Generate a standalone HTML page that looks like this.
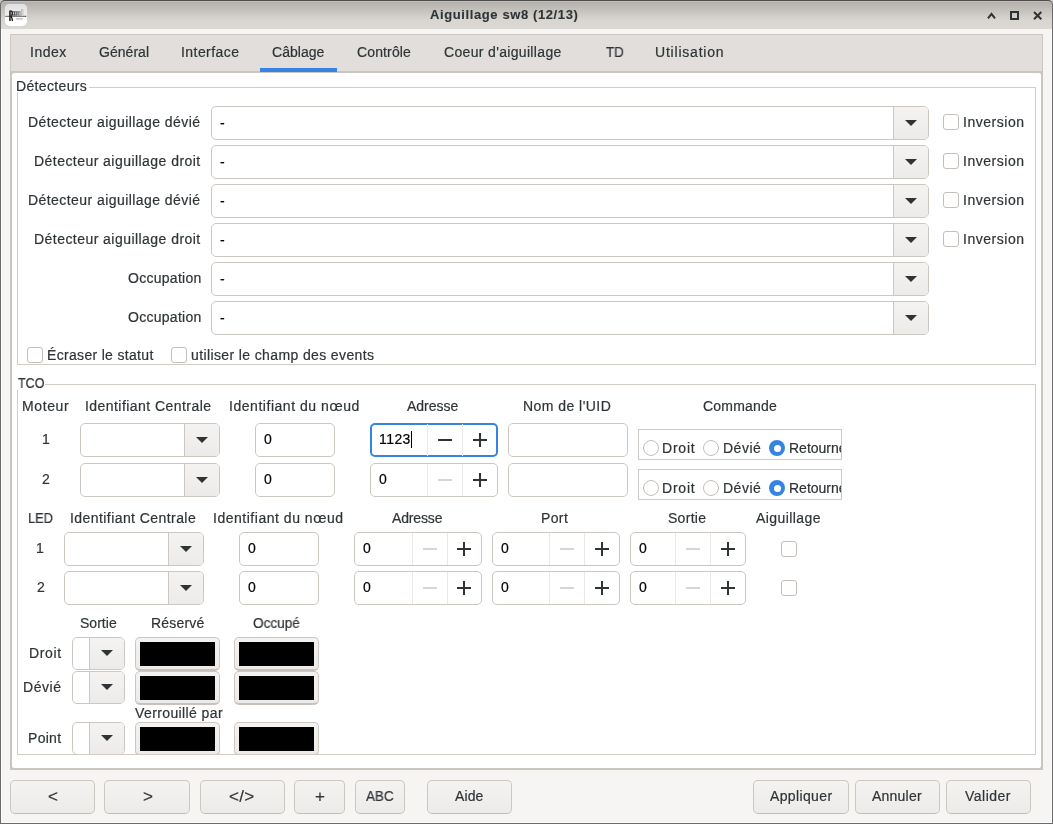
<!DOCTYPE html>
<html><head><meta charset="utf-8"><style>
html,body{margin:0;padding:0;width:1053px;height:824px;overflow:hidden;background:#c8c8c8}
body{position:relative;font-family:"Liberation Sans",sans-serif}
div,span,svg{position:absolute}
span{white-space:pre;will-change:transform;-webkit-text-stroke:0.2px currentColor}
</style></head><body>
<div style="left:0px;top:0px;width:1053px;height:824px;background:#f6f5f4"></div>
<div style="left:0px;top:0px;width:1053px;height:29px;background:linear-gradient(#c2c0bd 0,#c2c0bd 1.5px,#b4b1ad 2px,#d9d5d1 20px,#dcd8d4 29px)"></div>
<span style="left:430.00px;top:7.20px;font-size:13px;line-height:16px;font-weight:bold;color:#2e3436;letter-spacing:0.606px;-webkit-text-stroke:0.1px currentColor;">Aiguillage sw8 (12/13)</span>
<svg style="left:980px;top:6px" width="70" height="20"><g stroke="#2e3436" stroke-width="2" fill="none"><path d="M8 12.3L11.5 7.8L15 12.3"/><rect x="31" y="6" width="7" height="7"/><path d="M54 6L61.3 13.3M61.3 6L54 13.3"/></g></svg>
<div style="left:5px;top:4px;width:22px;height:22px;border-radius:5px;background:#fff"></div>
<svg style="left:5px;top:4px" width="22" height="22"><defs><linearGradient id="ig" x1="0" y1="0" x2="0" y2="1"><stop offset="0" stop-color="#e0e0e0"/><stop offset="1" stop-color="#f0f0f0"/></linearGradient><linearGradient id="lg" x1="0" y1="0" x2="1" y2="0"><stop offset="0" stop-color="#3a3a3a"/><stop offset="1" stop-color="#8a8a8a"/></linearGradient><linearGradient id="lg2" x1="0" y1="0" x2="1" y2="0"><stop offset="0" stop-color="#b0b0b0"/><stop offset="1" stop-color="#d8d8d8"/></linearGradient></defs><path d="M0 5Q0 0 5 0H17Q22 0 22 5V12.4H0Z" fill="url(#ig)"/><path d="M7.2 7.3H15.6V11.6H7.2Z" fill="url(#lg)"/><path d="M8 8.3H9V10.6H8ZM10.2 8.3H11.2V10.6H10.2ZM12.6 8.3H13.2V11.6H12.6ZM14.2 8.6H15V10.4H14.2Z" fill="#f2f2f2" opacity="0.9"/><path d="M16 5.1H18.8V11.6H16Z" fill="url(#lg2)"/><path d="M16.9 6.4H17.5V11.6H16.9Z" fill="#f4f4f4" opacity="0.7"/><path d="M0.2 12.35H20.6" stroke="#555" stroke-width="0.9"/><path d="M20 11.4L21.6 12.35L20 13.3Z" fill="#444"/><rect x="4.2" y="6.5" width="1.5" height="10.5" fill="#1c1c1c"/><path d="M5.2 7.2H6.3Q7.2 7.2 7.2 8.6V9.9Q7.2 11.2 6.1 11.2H5.4" stroke="#1c1c1c" stroke-width="1.3" fill="none"/><path d="M6.1 11.6L7.6 17" stroke="#1c1c1c" stroke-width="1.3"/><rect x="10.9" y="14.1" width="7" height="1.5" fill="#c2c2c2"/></svg>
<div style="left:10px;top:34px;width:1033px;height:39px;box-sizing:border-box;border:1px solid #cdc7c2;border-bottom:none;background:#e1dedb"></div>
<div style="left:10px;top:71px;width:1033px;height:699px;background:#cbc5c0"></div>
<div style="left:12px;top:73px;width:1029px;height:695px;background:#fff;border-radius:2px"></div>
<div style="left:260px;top:68px;width:77px;height:4px;background:#3584e4"></div>
<span style="left:30.00px;top:44.15px;font-size:14px;line-height:16px;font-weight:normal;color:#2e3436;letter-spacing:0.488px;">Index</span>
<span style="left:99.30px;top:44.15px;font-size:14px;line-height:16px;font-weight:normal;color:#2e3436;letter-spacing:0.034px;">Général</span>
<span style="left:181.20px;top:44.15px;font-size:14px;line-height:16px;font-weight:normal;color:#2e3436;letter-spacing:0.439px;">Interface</span>
<span style="left:272.20px;top:44.15px;font-size:14px;line-height:16px;font-weight:normal;color:#2e3436;letter-spacing:0.022px;">Câblage</span>
<span style="left:357.40px;top:44.15px;font-size:14px;line-height:16px;font-weight:normal;color:#2e3436;letter-spacing:0.138px;">Contrôle</span>
<span style="left:444.10px;top:44.15px;font-size:14px;line-height:16px;font-weight:normal;color:#2e3436;letter-spacing:0.332px;">Coeur d'aiguillage</span>
<span style="left:606.00px;top:44.15px;font-size:14px;line-height:16px;font-weight:normal;color:#2e3436;letter-spacing:0.000px;transform:scaleX(0.9541);transform-origin:0.00px 0;">TD</span>
<span style="left:655.10px;top:44.15px;font-size:14px;line-height:16px;font-weight:normal;color:#2e3436;letter-spacing:0.790px;">Utilisation</span>
<div style="left:17px;top:87px;width:1019px;height:278px;box-sizing:border-box;border:1px solid #d2ccc7"></div>
<div style="left:16px;top:78px;width:73px;height:14px;background:#fff"></div>
<span style="left:16.40px;top:77.95px;font-size:14px;line-height:16px;font-weight:normal;color:#2e3436;letter-spacing:0.345px;">Détecteurs</span>
<span style="left:27.70px;top:114.15px;font-size:14px;line-height:16px;font-weight:normal;color:#2e3436;letter-spacing:0.439px;">Détecteur aiguillage dévié</span>
<div style="left:211px;top:106px;width:718px;height:34px;overflow:hidden"><div style="left:0;top:0;width:718px;height:34px;box-sizing:border-box;border:1px solid #cdc7c2;border-radius:5px;background:#fff;overflow:hidden"><div style="left:681px;top:0;right:0;bottom:0;border-left:1px solid #cdc7c2;background:linear-gradient(#f4f3f2,#edebe9)"></div><svg style="position:absolute;left:693px;top:13px" width="12" height="6"><path d="M0 0H12L6 6Z" fill="#2e3436"/></svg></div></div>
<span style="left:220.00px;top:115.15px;font-size:14px;line-height:16px;font-weight:normal;color:#000;letter-spacing:0.000px;">-</span>
<div style="left:943px;top:114px;width:16px;height:16px;box-sizing:border-box;border:1px solid #c6bfb9;border-radius:3px;background:#fff"></div>
<span style="left:962.60px;top:114.15px;font-size:14px;line-height:16px;font-weight:normal;color:#2e3436;letter-spacing:0.522px;">Inversion</span>
<span style="left:33.70px;top:153.15px;font-size:14px;line-height:16px;font-weight:normal;color:#2e3436;letter-spacing:0.453px;">Détecteur aiguillage droit</span>
<div style="left:211px;top:145px;width:718px;height:34px;overflow:hidden"><div style="left:0;top:0;width:718px;height:34px;box-sizing:border-box;border:1px solid #cdc7c2;border-radius:5px;background:#fff;overflow:hidden"><div style="left:681px;top:0;right:0;bottom:0;border-left:1px solid #cdc7c2;background:linear-gradient(#f4f3f2,#edebe9)"></div><svg style="position:absolute;left:693px;top:13px" width="12" height="6"><path d="M0 0H12L6 6Z" fill="#2e3436"/></svg></div></div>
<span style="left:220.00px;top:154.15px;font-size:14px;line-height:16px;font-weight:normal;color:#000;letter-spacing:0.000px;">-</span>
<div style="left:943px;top:153px;width:16px;height:16px;box-sizing:border-box;border:1px solid #c6bfb9;border-radius:3px;background:#fff"></div>
<span style="left:962.60px;top:153.15px;font-size:14px;line-height:16px;font-weight:normal;color:#2e3436;letter-spacing:0.522px;">Inversion</span>
<span style="left:27.70px;top:192.15px;font-size:14px;line-height:16px;font-weight:normal;color:#2e3436;letter-spacing:0.439px;">Détecteur aiguillage dévié</span>
<div style="left:211px;top:184px;width:718px;height:34px;overflow:hidden"><div style="left:0;top:0;width:718px;height:34px;box-sizing:border-box;border:1px solid #cdc7c2;border-radius:5px;background:#fff;overflow:hidden"><div style="left:681px;top:0;right:0;bottom:0;border-left:1px solid #cdc7c2;background:linear-gradient(#f4f3f2,#edebe9)"></div><svg style="position:absolute;left:693px;top:13px" width="12" height="6"><path d="M0 0H12L6 6Z" fill="#2e3436"/></svg></div></div>
<span style="left:220.00px;top:193.15px;font-size:14px;line-height:16px;font-weight:normal;color:#000;letter-spacing:0.000px;">-</span>
<div style="left:943px;top:192px;width:16px;height:16px;box-sizing:border-box;border:1px solid #c6bfb9;border-radius:3px;background:#fff"></div>
<span style="left:962.60px;top:192.15px;font-size:14px;line-height:16px;font-weight:normal;color:#2e3436;letter-spacing:0.522px;">Inversion</span>
<span style="left:33.70px;top:231.15px;font-size:14px;line-height:16px;font-weight:normal;color:#2e3436;letter-spacing:0.453px;">Détecteur aiguillage droit</span>
<div style="left:211px;top:223px;width:718px;height:34px;overflow:hidden"><div style="left:0;top:0;width:718px;height:34px;box-sizing:border-box;border:1px solid #cdc7c2;border-radius:5px;background:#fff;overflow:hidden"><div style="left:681px;top:0;right:0;bottom:0;border-left:1px solid #cdc7c2;background:linear-gradient(#f4f3f2,#edebe9)"></div><svg style="position:absolute;left:693px;top:13px" width="12" height="6"><path d="M0 0H12L6 6Z" fill="#2e3436"/></svg></div></div>
<span style="left:220.00px;top:232.15px;font-size:14px;line-height:16px;font-weight:normal;color:#000;letter-spacing:0.000px;">-</span>
<div style="left:943px;top:231px;width:16px;height:16px;box-sizing:border-box;border:1px solid #c6bfb9;border-radius:3px;background:#fff"></div>
<span style="left:962.60px;top:231.15px;font-size:14px;line-height:16px;font-weight:normal;color:#2e3436;letter-spacing:0.522px;">Inversion</span>
<span style="left:127.50px;top:270.15px;font-size:14px;line-height:16px;font-weight:normal;color:#2e3436;letter-spacing:0.274px;">Occupation</span>
<div style="left:211px;top:262px;width:718px;height:34px;overflow:hidden"><div style="left:0;top:0;width:718px;height:34px;box-sizing:border-box;border:1px solid #cdc7c2;border-radius:5px;background:#fff;overflow:hidden"><div style="left:681px;top:0;right:0;bottom:0;border-left:1px solid #cdc7c2;background:linear-gradient(#f4f3f2,#edebe9)"></div><svg style="position:absolute;left:693px;top:13px" width="12" height="6"><path d="M0 0H12L6 6Z" fill="#2e3436"/></svg></div></div>
<span style="left:220.00px;top:271.15px;font-size:14px;line-height:16px;font-weight:normal;color:#000;letter-spacing:0.000px;">-</span>
<span style="left:127.50px;top:309.15px;font-size:14px;line-height:16px;font-weight:normal;color:#2e3436;letter-spacing:0.274px;">Occupation</span>
<div style="left:211px;top:301px;width:718px;height:34px;overflow:hidden"><div style="left:0;top:0;width:718px;height:34px;box-sizing:border-box;border:1px solid #cdc7c2;border-radius:5px;background:#fff;overflow:hidden"><div style="left:681px;top:0;right:0;bottom:0;border-left:1px solid #cdc7c2;background:linear-gradient(#f4f3f2,#edebe9)"></div><svg style="position:absolute;left:693px;top:13px" width="12" height="6"><path d="M0 0H12L6 6Z" fill="#2e3436"/></svg></div></div>
<span style="left:220.00px;top:310.15px;font-size:14px;line-height:16px;font-weight:normal;color:#000;letter-spacing:0.000px;">-</span>
<div style="left:27px;top:347px;width:16px;height:16px;box-sizing:border-box;border:1px solid #c6bfb9;border-radius:3px;background:#fff"></div>
<span style="left:46.50px;top:346.95px;font-size:14px;line-height:16px;font-weight:normal;color:#2e3436;letter-spacing:0.321px;">Écraser le statut</span>
<div style="left:171px;top:347px;width:16px;height:16px;box-sizing:border-box;border:1px solid #c6bfb9;border-radius:3px;background:#fff"></div>
<span style="left:191.20px;top:346.95px;font-size:14px;line-height:16px;font-weight:normal;color:#2e3436;letter-spacing:0.380px;">utiliser le champ des events</span>
<div style="left:17px;top:384px;width:1019px;height:371px;box-sizing:border-box;border:1px solid #d2ccc7"></div>
<div style="left:16px;top:376px;width:29px;height:14px;background:#fff"></div>
<span style="left:17.50px;top:374.65px;font-size:14px;line-height:16px;font-weight:normal;color:#2e3436;letter-spacing:0.000px;transform:scaleX(0.8934);transform-origin:0.00px 0;">TCO</span>
<span style="left:22.40px;top:398.15px;font-size:14px;line-height:16px;font-weight:normal;color:#2e3436;letter-spacing:0.598px;">Moteur</span>
<span style="left:85.30px;top:398.15px;font-size:14px;line-height:16px;font-weight:normal;color:#2e3436;letter-spacing:0.446px;">Identifiant Centrale</span>
<span style="left:229.00px;top:398.15px;font-size:14px;line-height:16px;font-weight:normal;color:#2e3436;letter-spacing:0.536px;">Identifiant du nœud</span>
<span style="left:407.00px;top:398.15px;font-size:14px;line-height:16px;font-weight:normal;color:#2e3436;letter-spacing:-0.012px;">Adresse</span>
<span style="left:523.30px;top:398.15px;font-size:14px;line-height:16px;font-weight:normal;color:#2e3436;letter-spacing:0.455px;">Nom de l'UID</span>
<span style="left:702.60px;top:398.15px;font-size:14px;line-height:16px;font-weight:normal;color:#2e3436;letter-spacing:0.203px;">Commande</span>
<span style="left:41.70px;top:431.15px;font-size:14px;line-height:16px;font-weight:normal;color:#2e3436;letter-spacing:0.000px;">1</span>
<div style="left:80px;top:423px;width:140px;height:34px;overflow:hidden"><div style="left:0;top:0;width:140px;height:34px;box-sizing:border-box;border:1px solid #cdc7c2;border-radius:5px;background:#fff;overflow:hidden"><div style="left:103px;top:0;right:0;bottom:0;border-left:1px solid #cdc7c2;background:linear-gradient(#f4f3f2,#edebe9)"></div><svg style="position:absolute;left:115px;top:13px" width="12" height="6"><path d="M0 0H12L6 6Z" fill="#2e3436"/></svg></div></div>
<div style="left:255px;top:423px;width:80px;height:34px;box-sizing:border-box;border:1px solid #cdc7c2;border-radius:5px;background:#fff"></div>
<span style="left:264.10px;top:431.15px;font-size:14px;line-height:16px;font-weight:normal;color:#000;letter-spacing:0.000px;">0</span>
<div style="left:370px;top:423px;width:128px;height:34px;box-sizing:border-box;border:2px solid #3584e4;border-radius:5px;background:#fff"></div>
<div style="left:427px;top:424px;width:1px;height:32px;background:#ebe9e6"></div>
<div style="left:462px;top:424px;width:1px;height:32px;background:#ebe9e6"></div>
<svg style="left:437.5px;top:433.0px" width="14" height="14"><path d="M0 7H14" stroke="#2e3436" stroke-width="2"/></svg>
<svg style="left:472.5px;top:433.0px" width="14" height="14"><path d="M0 7H14M7 0V14" stroke="#2e3436" stroke-width="2"/></svg>
<span style="left:378.80px;top:431.15px;font-size:14px;line-height:16px;font-weight:normal;color:#000;letter-spacing:0.427px;">1123</span>
<div style="left:508px;top:423px;width:120px;height:34px;box-sizing:border-box;border:1px solid #cdc7c2;border-radius:5px;background:#fff"></div>
<div style="left:638px;top:429px;width:204px;height:31px;box-sizing:border-box;border:1px solid #cfcac5;overflow:hidden"></div>
<div style="left:643px;top:440px;width:16px;height:16px;box-sizing:border-box;border:1px solid #c6bfb9;border-radius:50%;background:#fff"></div>
<span style="left:662.00px;top:439.95px;font-size:14px;line-height:16px;font-weight:normal;color:#2e3436;letter-spacing:0.783px;">Droit</span>
<div style="left:703px;top:440px;width:16px;height:16px;box-sizing:border-box;border:1px solid #c6bfb9;border-radius:50%;background:#fff"></div>
<span style="left:722.70px;top:439.95px;font-size:14px;line-height:16px;font-weight:normal;color:#2e3436;letter-spacing:0.498px;">Dévié</span>
<div style="left:769px;top:440px;width:16px;height:16px;box-sizing:border-box;border-radius:50%;background:#3584e4"></div>
<div style="left:773.5px;top:444.5px;width:7px;height:7px;border-radius:50%;background:#fff"></div>
<div style="left:789px;top:429px;width:52px;height:31px;overflow:hidden">
<span style="left:-0.50px;top:10.95px;font-size:14px;line-height:16px;font-weight:normal;color:#2e3436;letter-spacing:0.000px;">Retourné</span>
</div>
<span style="left:42.20px;top:471.15px;font-size:14px;line-height:16px;font-weight:normal;color:#2e3436;letter-spacing:0.000px;">2</span>
<div style="left:80px;top:463px;width:140px;height:34px;overflow:hidden"><div style="left:0;top:0;width:140px;height:34px;box-sizing:border-box;border:1px solid #cdc7c2;border-radius:5px;background:#fff;overflow:hidden"><div style="left:103px;top:0;right:0;bottom:0;border-left:1px solid #cdc7c2;background:linear-gradient(#f4f3f2,#edebe9)"></div><svg style="position:absolute;left:115px;top:13px" width="12" height="6"><path d="M0 0H12L6 6Z" fill="#2e3436"/></svg></div></div>
<div style="left:255px;top:463px;width:80px;height:34px;box-sizing:border-box;border:1px solid #cdc7c2;border-radius:5px;background:#fff"></div>
<span style="left:264.10px;top:471.15px;font-size:14px;line-height:16px;font-weight:normal;color:#000;letter-spacing:0.000px;">0</span>
<div style="left:370px;top:463px;width:128px;height:34px;box-sizing:border-box;border:1px solid #cdc7c2;border-radius:5px;background:#fff"></div>
<div style="left:427px;top:464px;width:1px;height:32px;background:#ebe9e6"></div>
<div style="left:462px;top:464px;width:1px;height:32px;background:#ebe9e6"></div>
<svg style="left:437.5px;top:473.0px" width="14" height="14"><path d="M0 7H14" stroke="#d8d5d2" stroke-width="2"/></svg>
<svg style="left:472.5px;top:473.0px" width="14" height="14"><path d="M0 7H14M7 0V14" stroke="#2e3436" stroke-width="2"/></svg>
<span style="left:379.10px;top:471.15px;font-size:14px;line-height:16px;font-weight:normal;color:#000;letter-spacing:0.000px;">0</span>
<div style="left:508px;top:463px;width:120px;height:34px;box-sizing:border-box;border:1px solid #cdc7c2;border-radius:5px;background:#fff"></div>
<div style="left:638px;top:469px;width:204px;height:31px;box-sizing:border-box;border:1px solid #cfcac5;overflow:hidden"></div>
<div style="left:643px;top:480px;width:16px;height:16px;box-sizing:border-box;border:1px solid #c6bfb9;border-radius:50%;background:#fff"></div>
<span style="left:662.00px;top:479.95px;font-size:14px;line-height:16px;font-weight:normal;color:#2e3436;letter-spacing:0.783px;">Droit</span>
<div style="left:703px;top:480px;width:16px;height:16px;box-sizing:border-box;border:1px solid #c6bfb9;border-radius:50%;background:#fff"></div>
<span style="left:722.70px;top:479.95px;font-size:14px;line-height:16px;font-weight:normal;color:#2e3436;letter-spacing:0.498px;">Dévié</span>
<div style="left:769px;top:480px;width:16px;height:16px;box-sizing:border-box;border-radius:50%;background:#3584e4"></div>
<div style="left:773.5px;top:484.5px;width:7px;height:7px;border-radius:50%;background:#fff"></div>
<div style="left:789px;top:469px;width:52px;height:31px;overflow:hidden">
<span style="left:-0.50px;top:10.95px;font-size:14px;line-height:16px;font-weight:normal;color:#2e3436;letter-spacing:0.000px;">Retourné</span>
</div>
<div style="left:411px;top:431px;width:1px;height:17px;background:#000"></div>
<span style="left:27.70px;top:510.15px;font-size:14px;line-height:16px;font-weight:normal;color:#2e3436;letter-spacing:0.000px;transform:scaleX(0.9149);transform-origin:1.00px 0;">LED</span>
<span style="left:69.50px;top:510.15px;font-size:14px;line-height:16px;font-weight:normal;color:#2e3436;letter-spacing:0.430px;">Identifiant Centrale</span>
<span style="left:213.40px;top:510.15px;font-size:14px;line-height:16px;font-weight:normal;color:#2e3436;letter-spacing:0.520px;">Identifiant du nœud</span>
<span style="left:391.60px;top:510.15px;font-size:14px;line-height:16px;font-weight:normal;color:#2e3436;letter-spacing:-0.145px;">Adresse</span>
<span style="left:541.20px;top:510.15px;font-size:14px;line-height:16px;font-weight:normal;color:#2e3436;letter-spacing:0.371px;">Port</span>
<span style="left:667.80px;top:510.15px;font-size:14px;line-height:16px;font-weight:normal;color:#2e3436;letter-spacing:0.283px;">Sortie</span>
<span style="left:755.90px;top:510.15px;font-size:14px;line-height:16px;font-weight:normal;color:#2e3436;letter-spacing:0.431px;">Aiguillage</span>
<span style="left:35.80px;top:540.15px;font-size:14px;line-height:16px;font-weight:normal;color:#2e3436;letter-spacing:0.000px;">1</span>
<div style="left:64px;top:532px;width:140px;height:34px;overflow:hidden"><div style="left:0;top:0;width:140px;height:34px;box-sizing:border-box;border:1px solid #cdc7c2;border-radius:5px;background:#fff;overflow:hidden"><div style="left:103px;top:0;right:0;bottom:0;border-left:1px solid #cdc7c2;background:linear-gradient(#f4f3f2,#edebe9)"></div><svg style="position:absolute;left:115px;top:13px" width="12" height="6"><path d="M0 0H12L6 6Z" fill="#2e3436"/></svg></div></div>
<div style="left:239px;top:532px;width:80px;height:34px;box-sizing:border-box;border:1px solid #cdc7c2;border-radius:5px;background:#fff"></div>
<span style="left:248.10px;top:540.15px;font-size:14px;line-height:16px;font-weight:normal;color:#000;letter-spacing:0.000px;">0</span>
<div style="left:354px;top:532px;width:128px;height:34px;box-sizing:border-box;border:1px solid #cdc7c2;border-radius:5px;background:#fff"></div>
<div style="left:412px;top:533px;width:1px;height:32px;background:#ebe9e6"></div>
<div style="left:447px;top:533px;width:1px;height:32px;background:#ebe9e6"></div>
<svg style="left:422.5px;top:542.0px" width="14" height="14"><path d="M0 7H14" stroke="#d8d5d2" stroke-width="2"/></svg>
<svg style="left:457.0px;top:542.0px" width="14" height="14"><path d="M0 7H14M7 0V14" stroke="#2e3436" stroke-width="2"/></svg>
<span style="left:363.10px;top:540.15px;font-size:14px;line-height:16px;font-weight:normal;color:#000;letter-spacing:0.000px;">0</span>
<div style="left:492px;top:532px;width:128px;height:34px;box-sizing:border-box;border:1px solid #cdc7c2;border-radius:5px;background:#fff"></div>
<div style="left:549px;top:533px;width:1px;height:32px;background:#ebe9e6"></div>
<div style="left:584px;top:533px;width:1px;height:32px;background:#ebe9e6"></div>
<svg style="left:559.5px;top:542.0px" width="14" height="14"><path d="M0 7H14" stroke="#d8d5d2" stroke-width="2"/></svg>
<svg style="left:595.0px;top:542.0px" width="14" height="14"><path d="M0 7H14M7 0V14" stroke="#2e3436" stroke-width="2"/></svg>
<span style="left:501.10px;top:540.15px;font-size:14px;line-height:16px;font-weight:normal;color:#000;letter-spacing:0.000px;">0</span>
<div style="left:630px;top:532px;width:116px;height:34px;box-sizing:border-box;border:1px solid #cdc7c2;border-radius:5px;background:#fff"></div>
<div style="left:675px;top:533px;width:1px;height:32px;background:#ebe9e6"></div>
<div style="left:710px;top:533px;width:1px;height:32px;background:#ebe9e6"></div>
<svg style="left:685.5px;top:542.0px" width="14" height="14"><path d="M0 7H14" stroke="#d8d5d2" stroke-width="2"/></svg>
<svg style="left:720.5px;top:542.0px" width="14" height="14"><path d="M0 7H14M7 0V14" stroke="#2e3436" stroke-width="2"/></svg>
<span style="left:639.10px;top:540.15px;font-size:14px;line-height:16px;font-weight:normal;color:#000;letter-spacing:0.000px;">0</span>
<div style="left:781px;top:541px;width:16px;height:16px;box-sizing:border-box;border:1px solid #c6bfb9;border-radius:3px;background:#fff"></div>
<span style="left:36.80px;top:579.15px;font-size:14px;line-height:16px;font-weight:normal;color:#2e3436;letter-spacing:0.000px;">2</span>
<div style="left:64px;top:571px;width:140px;height:34px;overflow:hidden"><div style="left:0;top:0;width:140px;height:34px;box-sizing:border-box;border:1px solid #cdc7c2;border-radius:5px;background:#fff;overflow:hidden"><div style="left:103px;top:0;right:0;bottom:0;border-left:1px solid #cdc7c2;background:linear-gradient(#f4f3f2,#edebe9)"></div><svg style="position:absolute;left:115px;top:13px" width="12" height="6"><path d="M0 0H12L6 6Z" fill="#2e3436"/></svg></div></div>
<div style="left:239px;top:571px;width:80px;height:34px;box-sizing:border-box;border:1px solid #cdc7c2;border-radius:5px;background:#fff"></div>
<span style="left:248.10px;top:579.15px;font-size:14px;line-height:16px;font-weight:normal;color:#000;letter-spacing:0.000px;">0</span>
<div style="left:354px;top:571px;width:128px;height:34px;box-sizing:border-box;border:1px solid #cdc7c2;border-radius:5px;background:#fff"></div>
<div style="left:412px;top:572px;width:1px;height:32px;background:#ebe9e6"></div>
<div style="left:447px;top:572px;width:1px;height:32px;background:#ebe9e6"></div>
<svg style="left:422.5px;top:581.0px" width="14" height="14"><path d="M0 7H14" stroke="#d8d5d2" stroke-width="2"/></svg>
<svg style="left:457.0px;top:581.0px" width="14" height="14"><path d="M0 7H14M7 0V14" stroke="#2e3436" stroke-width="2"/></svg>
<span style="left:363.10px;top:579.15px;font-size:14px;line-height:16px;font-weight:normal;color:#000;letter-spacing:0.000px;">0</span>
<div style="left:492px;top:571px;width:128px;height:34px;box-sizing:border-box;border:1px solid #cdc7c2;border-radius:5px;background:#fff"></div>
<div style="left:549px;top:572px;width:1px;height:32px;background:#ebe9e6"></div>
<div style="left:584px;top:572px;width:1px;height:32px;background:#ebe9e6"></div>
<svg style="left:559.5px;top:581.0px" width="14" height="14"><path d="M0 7H14" stroke="#d8d5d2" stroke-width="2"/></svg>
<svg style="left:595.0px;top:581.0px" width="14" height="14"><path d="M0 7H14M7 0V14" stroke="#2e3436" stroke-width="2"/></svg>
<span style="left:501.10px;top:579.15px;font-size:14px;line-height:16px;font-weight:normal;color:#000;letter-spacing:0.000px;">0</span>
<div style="left:630px;top:571px;width:116px;height:34px;box-sizing:border-box;border:1px solid #cdc7c2;border-radius:5px;background:#fff"></div>
<div style="left:675px;top:572px;width:1px;height:32px;background:#ebe9e6"></div>
<div style="left:710px;top:572px;width:1px;height:32px;background:#ebe9e6"></div>
<svg style="left:685.5px;top:581.0px" width="14" height="14"><path d="M0 7H14" stroke="#d8d5d2" stroke-width="2"/></svg>
<svg style="left:720.5px;top:581.0px" width="14" height="14"><path d="M0 7H14M7 0V14" stroke="#2e3436" stroke-width="2"/></svg>
<span style="left:639.10px;top:579.15px;font-size:14px;line-height:16px;font-weight:normal;color:#000;letter-spacing:0.000px;">0</span>
<div style="left:781px;top:580px;width:16px;height:16px;box-sizing:border-box;border:1px solid #c6bfb9;border-radius:3px;background:#fff"></div>
<span style="left:79.70px;top:615.15px;font-size:14px;line-height:16px;font-weight:normal;color:#2e3436;letter-spacing:0.023px;">Sortie</span>
<span style="left:151.30px;top:615.15px;font-size:14px;line-height:16px;font-weight:normal;color:#2e3436;letter-spacing:0.193px;">Réservé</span>
<span style="left:252.60px;top:615.15px;font-size:14px;line-height:16px;font-weight:normal;color:#2e3436;letter-spacing:0.000px;transform:scaleX(0.9678);transform-origin:0.00px 0;">Occupé</span>
<span style="left:28.60px;top:644.85px;font-size:14px;line-height:16px;font-weight:normal;color:#2e3436;letter-spacing:0.658px;">Droit</span>
<div style="left:72px;top:637px;width:53px;height:33px;overflow:hidden"><div style="left:0;top:0;width:53px;height:33px;box-sizing:border-box;border:1px solid #cdc7c2;border-radius:5px;background:#fff;overflow:hidden"><div style="left:16px;top:0;right:0;bottom:0;border-left:1px solid #cdc7c2;background:linear-gradient(#f4f3f2,#edebe9)"></div><svg style="position:absolute;left:28px;top:12px" width="12" height="6"><path d="M0 0H12L6 6Z" fill="#2e3436"/></svg></div></div>
<div style="left:135px;top:637px;width:85px;height:34px;overflow:hidden"><div style="left:0;top:0;width:85px;height:34px;box-sizing:border-box;border:1px solid #cdc7c2;border-bottom:2px solid #c9c2bc;border-radius:5px;background:linear-gradient(#f4f3f2,#edebe9)"><div style="left:4px;top:4px;right:4px;bottom:3px;background:#000"></div></div></div>
<div style="left:234px;top:637px;width:85px;height:34px;overflow:hidden"><div style="left:0;top:0;width:85px;height:34px;box-sizing:border-box;border:1px solid #cdc7c2;border-bottom:2px solid #c9c2bc;border-radius:5px;background:linear-gradient(#f4f3f2,#edebe9)"><div style="left:4px;top:4px;right:4px;bottom:3px;background:#000"></div></div></div>
<span style="left:22.60px;top:678.75px;font-size:14px;line-height:16px;font-weight:normal;color:#2e3436;letter-spacing:0.573px;">Dévié</span>
<div style="left:72px;top:671px;width:53px;height:33px;overflow:hidden"><div style="left:0;top:0;width:53px;height:33px;box-sizing:border-box;border:1px solid #cdc7c2;border-radius:5px;background:#fff;overflow:hidden"><div style="left:16px;top:0;right:0;bottom:0;border-left:1px solid #cdc7c2;background:linear-gradient(#f4f3f2,#edebe9)"></div><svg style="position:absolute;left:28px;top:12px" width="12" height="6"><path d="M0 0H12L6 6Z" fill="#2e3436"/></svg></div></div>
<div style="left:135px;top:671px;width:85px;height:34px;overflow:hidden"><div style="left:0;top:0;width:85px;height:34px;box-sizing:border-box;border:1px solid #cdc7c2;border-bottom:2px solid #c9c2bc;border-radius:5px;background:linear-gradient(#f4f3f2,#edebe9)"><div style="left:4px;top:4px;right:4px;bottom:3px;background:#000"></div></div></div>
<div style="left:234px;top:671px;width:85px;height:34px;overflow:hidden"><div style="left:0;top:0;width:85px;height:34px;box-sizing:border-box;border:1px solid #cdc7c2;border-bottom:2px solid #c9c2bc;border-radius:5px;background:linear-gradient(#f4f3f2,#edebe9)"><div style="left:4px;top:4px;right:4px;bottom:3px;background:#000"></div></div></div>
<span style="left:27.70px;top:729.75px;font-size:14px;line-height:16px;font-weight:normal;color:#2e3436;letter-spacing:0.295px;">Point</span>
<div style="left:72px;top:722px;width:53px;height:32px;overflow:hidden"><div style="left:0;top:0;width:53px;height:33px;box-sizing:border-box;border:1px solid #cdc7c2;border-radius:5px;background:#fff;overflow:hidden"><div style="left:16px;top:0;right:0;bottom:0;border-left:1px solid #cdc7c2;background:linear-gradient(#f4f3f2,#edebe9)"></div><svg style="position:absolute;left:28px;top:12px" width="12" height="6"><path d="M0 0H12L6 6Z" fill="#2e3436"/></svg></div></div>
<div style="left:135px;top:722px;width:85px;height:32px;overflow:hidden"><div style="left:0;top:0;width:85px;height:34px;box-sizing:border-box;border:1px solid #cdc7c2;border-bottom:2px solid #c9c2bc;border-radius:5px;background:linear-gradient(#f4f3f2,#edebe9)"><div style="left:4px;top:4px;right:4px;bottom:3px;background:#000"></div></div></div>
<div style="left:234px;top:722px;width:85px;height:32px;overflow:hidden"><div style="left:0;top:0;width:85px;height:34px;box-sizing:border-box;border:1px solid #cdc7c2;border-bottom:2px solid #c9c2bc;border-radius:5px;background:linear-gradient(#f4f3f2,#edebe9)"><div style="left:4px;top:4px;right:4px;bottom:3px;background:#000"></div></div></div>
<span style="left:135.40px;top:704.85px;font-size:14px;line-height:16px;font-weight:normal;color:#2e3436;letter-spacing:0.390px;">Verrouillé par</span>
<div style="left:10px;top:780px;width:85px;height:34px;box-sizing:border-box;border:1px solid #cdc7c2;border-bottom-color:#c4bdb7;border-radius:5px;background:linear-gradient(#f4f3f2,#edebe9)"></div>
<span style="left:48.00px;top:788.61px;font-size:17px;line-height:16px;font-weight:normal;color:#2e3436;letter-spacing:0.000px;">&lt;</span>
<div style="left:104px;top:780px;width:86px;height:34px;box-sizing:border-box;border:1px solid #cdc7c2;border-bottom-color:#c4bdb7;border-radius:5px;background:linear-gradient(#f4f3f2,#edebe9)"></div>
<span style="left:143.00px;top:788.61px;font-size:17px;line-height:16px;font-weight:normal;color:#2e3436;letter-spacing:0.000px;">&gt;</span>
<div style="left:200px;top:780px;width:85px;height:34px;box-sizing:border-box;border:1px solid #cdc7c2;border-bottom-color:#c4bdb7;border-radius:5px;background:linear-gradient(#f4f3f2,#edebe9)"></div>
<span style="left:229.40px;top:788.61px;font-size:17px;line-height:16px;font-weight:normal;color:#2e3436;letter-spacing:0.275px;">&lt;/&gt;</span>
<div style="left:294px;top:780px;width:51px;height:34px;box-sizing:border-box;border:1px solid #cdc7c2;border-bottom-color:#c4bdb7;border-radius:5px;background:linear-gradient(#f4f3f2,#edebe9)"></div>
<span style="left:314.90px;top:788.61px;font-size:17px;line-height:16px;font-weight:normal;color:#2e3436;letter-spacing:0.000px;">+</span>
<div style="left:355px;top:780px;width:50px;height:34px;box-sizing:border-box;border:1px solid #cdc7c2;border-bottom-color:#c4bdb7;border-radius:5px;background:linear-gradient(#f4f3f2,#edebe9)"></div>
<span style="left:365.70px;top:788.35px;font-size:14px;line-height:16px;font-weight:normal;color:#2e3436;letter-spacing:0.000px;transform:scaleX(0.9590);transform-origin:0.00px 0;">ABC</span>
<div style="left:427px;top:780px;width:85px;height:34px;box-sizing:border-box;border:1px solid #cdc7c2;border-bottom-color:#c4bdb7;border-radius:5px;background:linear-gradient(#f4f3f2,#edebe9)"></div>
<span style="left:455.30px;top:788.35px;font-size:14px;line-height:16px;font-weight:normal;color:#2e3436;letter-spacing:0.089px;">Aide</span>
<div style="left:753px;top:780px;width:96px;height:34px;box-sizing:border-box;border:1px solid #cdc7c2;border-bottom-color:#c4bdb7;border-radius:5px;background:linear-gradient(#f4f3f2,#edebe9)"></div>
<span style="left:770.30px;top:788.35px;font-size:14px;line-height:16px;font-weight:normal;color:#2e3436;letter-spacing:0.364px;">Appliquer</span>
<div style="left:855px;top:780px;width:85px;height:34px;box-sizing:border-box;border:1px solid #cdc7c2;border-bottom-color:#c4bdb7;border-radius:5px;background:linear-gradient(#f4f3f2,#edebe9)"></div>
<span style="left:872.30px;top:788.35px;font-size:14px;line-height:16px;font-weight:normal;color:#2e3436;letter-spacing:0.218px;">Annuler</span>
<div style="left:946px;top:780px;width:85px;height:34px;box-sizing:border-box;border:1px solid #cdc7c2;border-bottom-color:#c4bdb7;border-radius:5px;background:linear-gradient(#f4f3f2,#edebe9)"></div>
<span style="left:965.30px;top:788.35px;font-size:14px;line-height:16px;font-weight:normal;color:#2e3436;letter-spacing:0.487px;">Valider</span>
<div style="left:1px;top:29px;width:1051px;height:794px;box-sizing:border-box;border:1px solid #fdfcfb;border-top:none"></div>
<div style="left:0;top:0;width:1053px;height:824px;box-sizing:border-box;border:1px solid #6b6b6b;border-top-color:#4f4d4b;border-radius:5px 5px 0 0;box-shadow:0 0 0 3px #c8c8c8"></div>
</body></html>
